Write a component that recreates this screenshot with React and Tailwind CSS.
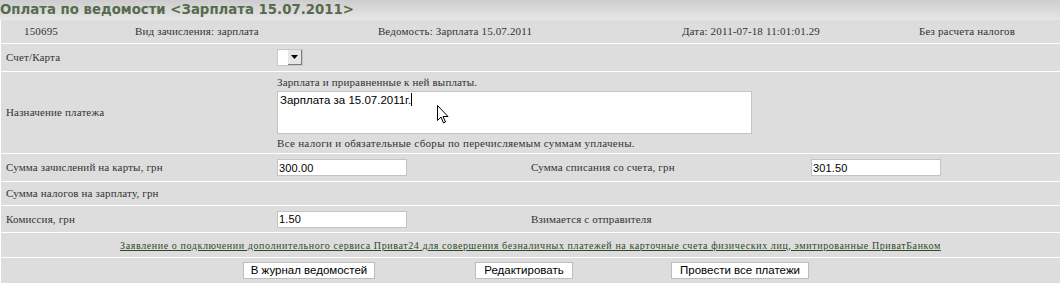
const serif = "font-['Liberation_Serif',serif]";
const sans = "font-['Liberation_Sans',Arial,sans-serif]";

const Row = ({ h, children, className = '' }) => (
  <div className={`flex items-center border-b border-white ${h} ${className}`}>{children}</div>
);

const Field = ({ value }) => (
  <input
    readOnly
    value={value}
    className={`w-[130px] h-[17px] bg-white border border-[#c4c4c4] px-[1px] text-[11px] text-black outline-none ${sans}`}
  />
);

const Button = ({ w, children }) => (
  <button className={`${w} h-[17px] bg-white border border-[#bdbdbd] text-[11.5px] leading-none text-black ${sans}`}>
    {children}
  </button>
);

export default function App() {
  return (
    <div className="w-[1060px] h-[283px] overflow-hidden bg-[#dddddd] text-[#333] relative">
      <div className="h-[20px] bg-gradient-to-b from-[#cdcdcd] to-[#e7e7e7] flex items-center">
        <h1 className="font-['DejaVu_Sans',sans-serif] font-bold text-[13.3px] text-[#566a4d] leading-none">
          Оплата по ведомости &lt;Зарплата 15.07.2011&gt;
        </h1>
      </div>

      <div className={`border-l border-white text-[11px] tracking-[0.15px] ${serif}`}>
        <Row h="h-[24px]">
          <div className="w-[80px] text-center">150695</div>
          <div className="w-[232px] text-center">Вид зачисления: зарплата</div>
          <div className="w-[284px] text-center">Ведомость: Зарплата 15.07.2011</div>
          <div className="w-[308px] text-center">Дата: 2011-07-18 11:01:01.29</div>
          <div className="w-[124px] text-center">Без расчета налогов</div>
        </Row>

        <Row h="h-[28px]">
          <div className="w-[276px] pl-[5px]">Счет/Карта</div>
          <div className="flex h-[17px] w-[26px] bg-white border border-[#c8c8c8]">
            <div className="flex-1" />
            <div className="w-[14px] flex items-center justify-center bg-[#e6e6e6] border-r border-b border-[#7a7a7a]">
              <svg width="7" height="4" viewBox="0 0 7 4">
                <path d="M0 0h7L3.5 4z" fill="#000" />
              </svg>
            </div>
          </div>
        </Row>

        <Row h="h-[82px]">
          <div className="w-[276px] pl-[5px]">Назначение платежа</div>
          <div className="flex flex-col gap-[2px]">
            <div className="leading-[14px]">Зарплата и приравненные к ней выплаты.</div>
            <div className={`w-[475px] h-[43px] bg-white border border-[#c4c4c4] px-[2px] text-[11.5px] text-black tracking-normal ${sans}`}>
              Зарплата за 15.07.2011г.<span className="inline-block w-px h-[13px] bg-black align-[-2px]" />
            </div>
            <div className="leading-[14px] tracking-[0.3px]">Все налоги и обязательные сборы по перечисляемым суммам уплачены.</div>
          </div>
        </Row>

        <Row h="h-[28px]">
          <div className="w-[276px] pl-[5px]">Сумма зачислений на карты, грн</div>
          <div className="w-[248px]"><Field value="300.00" /></div>
          <div className="w-[286px] pl-[6px]">Сумма списания со счета, грн</div>
          <Field value="301.50" />
        </Row>

        <Row h="h-[24px]">
          <div className="w-[276px] pl-[5px]">Сумма налогов на зарплату, грн</div>
        </Row>

        <Row h="h-[27px]">
          <div className="w-[276px] pl-[5px]">Комиссия, грн</div>
          <div className="w-[248px]"><Field value="1.50" /></div>
          <div className="pl-[6px]">Взимается с отправителя</div>
        </Row>

        <Row h="h-[25px]" className="justify-center">
          <a href="#" className="underline text-[#2f4a26] text-[10px] tracking-[0.6px]">
            Заявление о подключении дополнительного сервиса Приват24 для совершения безналичных платежей на карточные счета физических лиц, эмитированные ПриватБанком
          </a>
        </Row>

        <div className="h-[25px] flex items-center tracking-normal">
          <div className="w-[242px]" />
          <Button w="w-[132px]">В журнал ведомостей</Button>
          <div className="w-[100px]" />
          <Button w="w-[98px]">Редактировать</Button>
          <div className="w-[98px]" />
          <Button w="w-[138px]">Провести все платежи</Button>
        </div>
      </div>

      <svg className="absolute left-[437px] top-[105px]" width="12" height="19" viewBox="0 0 12 19">
        <path d="M0.5 0.5v15l3.5-3.5 2.5 6 2-1-2.5-5.5h5z" fill="#fff" stroke="#000" strokeWidth="1" strokeLinejoin="round" />
      </svg>
    </div>
  );
}
